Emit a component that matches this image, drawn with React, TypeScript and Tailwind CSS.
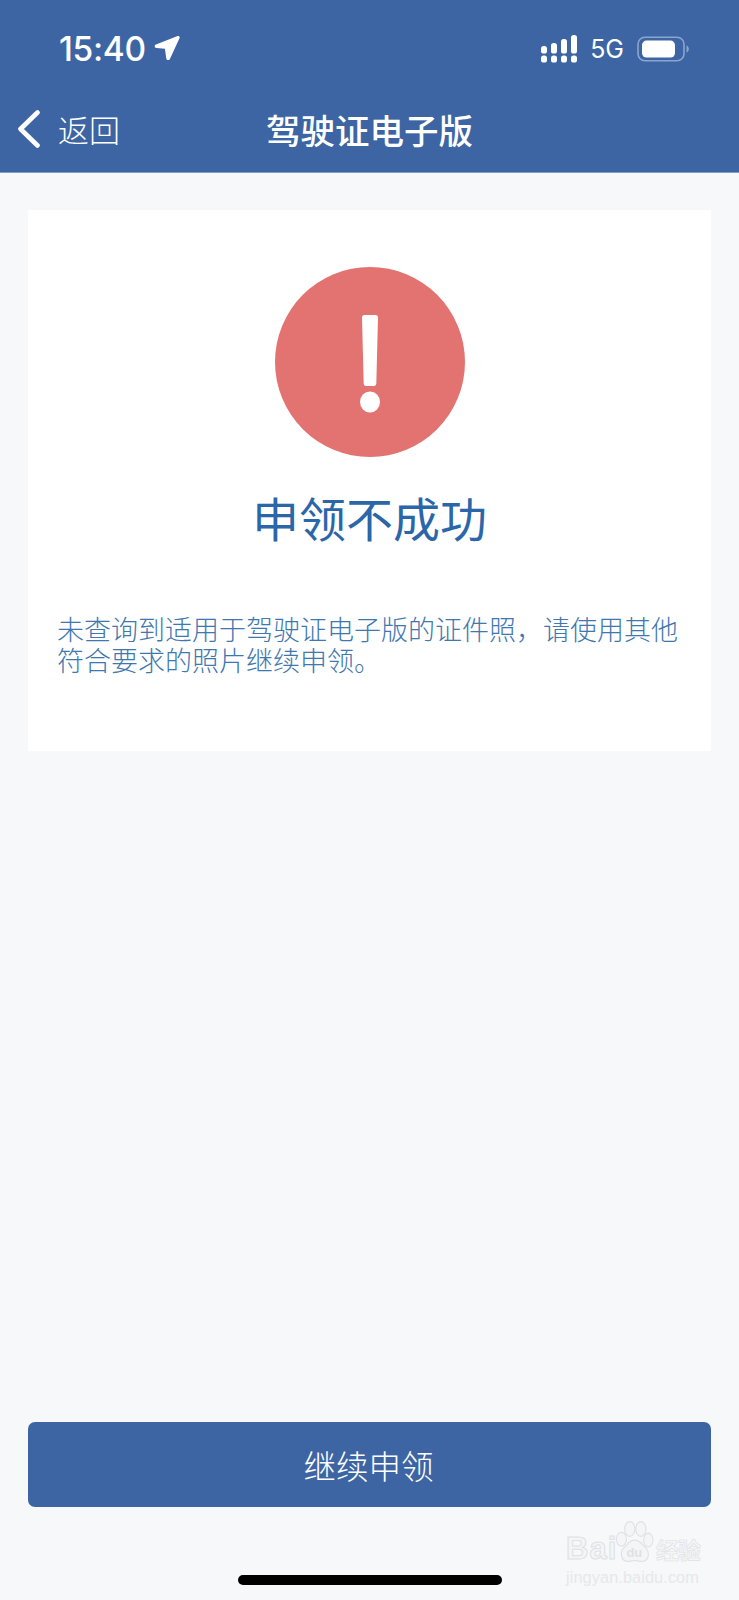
import React from "react";

const CJK = "font-['Noto_Sans_CJK_SC','Noto_Sans',sans-serif]";

function Signal() {
  return (
    <svg width="37" height="28" viewBox="0 0 37 28" fill="#fff">
      <rect x="0" y="11" width="6" height="7.5" rx="2.6" />
      <rect x="0" y="20.5" width="6" height="7" rx="2.6" />
      <rect x="10" y="8" width="6" height="10.5" rx="2.6" />
      <rect x="10" y="20.5" width="6" height="7" rx="2.6" />
      <rect x="20" y="4" width="6" height="14.5" rx="2.6" />
      <rect x="20" y="20.5" width="6" height="7" rx="2.6" />
      <rect x="30" y="0" width="6" height="18.5" rx="2.6" />
      <rect x="30" y="20.5" width="6" height="7" rx="2.6" />
    </svg>
  );
}

function Battery() {
  return (
    <svg width="52" height="26" viewBox="0 0 52 26">
      <rect x="1" y="1.2" width="46" height="23.6" rx="7" fill="none" stroke="#8aa5d0" strokeWidth="1.6" />
      <rect x="5" y="4.6" width="33" height="17" rx="4.5" fill="#fff" />
      <path d="M49.5 9.5c1.6.6 2.3 2 2.3 3.5s-.7 2.9-2.3 3.5z" fill="#8aa5d0" />
    </svg>
  );
}

function Watermark() {
  return (
    <div className="absolute left-[566px] top-[1519px] w-[134px] h-[66px] text-[#e6e8eb] select-none">
      <div className="flex items-end h-[45px]">
        <span className="font-['Liberation_Sans',sans-serif] font-bold text-[31px] leading-[30px] tracking-[1px] [-webkit-text-stroke:1px_#dfe1e4] text-[#f3f5f7]">Bai</span>
        <svg width="44" height="45" viewBox="0 0 44 45" fill="#f3f5f7" stroke="#dfe1e4" strokeWidth="1.2" className="ml-[-3px]">
          <ellipse cx="8" cy="20" rx="5.5" ry="7.5" />
          <ellipse cx="17" cy="9" rx="5.5" ry="8" />
          <ellipse cx="29" cy="9" rx="5.5" ry="8" />
          <ellipse cx="37" cy="21" rx="5" ry="7.5" />
          <path d="M22 21c-6 0-7 5-11 8-5 4-4 15 4 15 3 0 5-1 7-1s5 1 8 1c8 0 9-10 4-15-4-3-5-8-12-8z" />
          <text x="22" y="39" textAnchor="middle" fontSize="14" fontWeight="700" stroke="none" fill="#dfe1e4" fontFamily="Liberation Sans, sans-serif">du</text>
        </svg>
        <span className={`${CJK} font-bold text-[23px] leading-[29px] ml-[1px] whitespace-nowrap tracking-[-1px] [-webkit-text-stroke:0.6px_#dfe1e4] text-[#f3f5f7]`}>经验</span>
      </div>
      <div className="mt-[3px] font-['Liberation_Sans',sans-serif] text-[16.3px] leading-[20px] whitespace-nowrap tracking-[0.1px]">jingyan.baidu.com</div>
    </div>
  );
}

export default function App() {
  return (
    <div lang="zh-CN" className={`relative w-[739px] h-[1600px] overflow-hidden flex flex-col bg-[#f6f8fa] ${CJK}`}>
      <header className="h-[173px] shrink-0 bg-[#3d65a3] border-b border-[#7fa0c4] text-white flex flex-col">
        <div className="h-[100px] shrink-0 pl-[59px] pr-[50px] pt-[33px] flex items-start justify-between">
          <div className="flex items-center gap-[8px] h-[32px]">
            <span className="font-['Inter',sans-serif] font-medium text-[33.5px] leading-[32px] tracking-[-0.3px]">15:40</span>
            <svg width="26" height="26" viewBox="0 0 26 26" fill="#fff" className="mt-[-2px]">
              <path d="M23.6 1 2 9.6c-2 .8-1.6 3.3.5 3.5l8.4.7 1.4 9.6c.3 2 2.8 2.3 3.6.5L25.6 3c.5-1.300-.8-2.500-2-2z" />
            </svg>
          </div>
          <div className="flex items-center h-[32px]">
            <Signal />
            <span className="ml-[12px] font-['Inter',sans-serif] text-[25px] leading-[32px]">5G</span>
            <span className="ml-[13px] flex"><Battery /></span>
          </div>
        </div>
        <div className="flex-1 relative flex items-start justify-center">
          <span className="mt-[7px] text-[34.5px] leading-[44px] font-medium">驾驶证电子版</span>
          <div className="absolute left-[17px] top-[7px] flex items-center h-[44px]">
            <svg width="24" height="38" viewBox="0 0 24 38" fill="none" stroke="#fff" strokeWidth="4.6" strokeLinecap="round" strokeLinejoin="round">
              <path d="M20.5 2.500 3.500 19l17 16.500" />
            </svg>
            <span className="ml-[17px] text-[31px] leading-[44px] font-light">返回</span>
          </div>
        </div>
      </header>

      <main className="flex-1 flex flex-col px-[28px]">
        <section className="mt-[37px] h-[541px] bg-white flex flex-col items-center pt-[57px]">
          <div className="w-[190px] h-[190px] rounded-full bg-[#e27370] flex items-center justify-center">
            <svg width="22" height="98" viewBox="0 0 22 98" fill="#fff" className="mt-[3px]">
              <path d="M3 2.500C3 1.100 4 0 5.400 0h11.200C18 0 19 1.100 19 2.500l-1.700 66c0 1.400-1 2.500-2.200 2.500H6.900c-1.200 0-2.200-1.100-2.200-2.500z" />
              <ellipse cx="11" cy="87" rx="10" ry="10.500" />
            </svg>
          </div>
          <h1 className="mt-[29px] text-[47px] leading-[62px] font-normal text-[#2a66a8]">申领不成功</h1>
          <p className="mt-[65px] self-stretch pl-[29px] pr-[28px] text-[27px] leading-[31px] font-light text-[#3f78ae]">
            {"未查询到适用于驾驶证电子版的证件照\uFF0C请使用其他符合要求的照片继续申领\u3002"}
          </p>
        </section>

        <button className="mt-auto h-[85px] rounded-[7px] bg-[#3d65a3] text-white text-[32.5px] leading-[44px] font-light pr-[2px]">
          继续申领
        </button>
        <div className="mt-[68px] mb-[15px] mx-auto w-[264px] h-[10px] rounded-full bg-black" />
      </main>

      <Watermark />
    </div>
  );
}
